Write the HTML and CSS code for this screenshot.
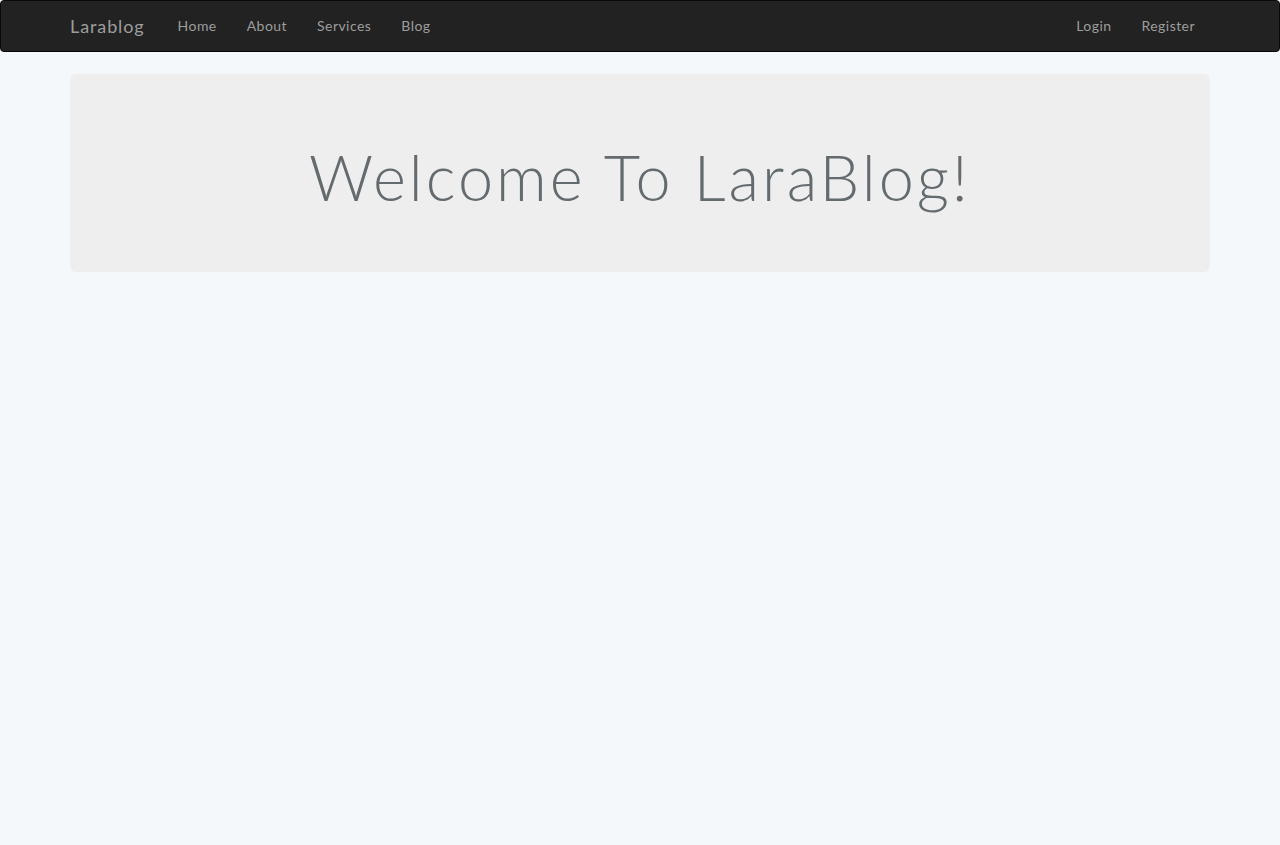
FILE: index.html
```html
<!DOCTYPE html>
<html lang="en">
<head>
<meta charset="utf-8">
<title>Larablog</title>
<link rel="stylesheet" href="styles.css">
</head>
<body>
<nav class="navbar">
  <div class="container nav-inner">
    <a class="brand" href="#">Larablog</a>
    <ul class="nav">
      <li><a href="#">Home</a></li>
      <li><a href="#">About</a></li>
      <li><a href="#">Services</a></li>
      <li><a href="#">Blog</a></li>
    </ul>
    <ul class="nav nav-right">
      <li><a href="#">Login</a></li>
      <li><a href="#">Register</a></li>
    </ul>
  </div>
</nav>
<div class="container">
  <div class="jumbotron">
    <h1>Welcome To LaraBlog!</h1>
  </div>
</div>
</body>
</html>
```

FILE: styles.css
```css
* { box-sizing: border-box; }
html, body { margin: 0; padding: 0; }
body {
  background: #f5f8fa;
  font-family: Lato, "Open Sans", sans-serif;
  font-weight: 300;
  font-size: 14px;
  line-height: 22px;
  color: #636b6f;
  height: 845px;
}
a { text-decoration: none; }
.navbar {
  background: #222;
  border: 1px solid #090909;
  border-radius: 4px;
  min-height: 52px;
  margin-bottom: 22px;
}
.container {
  width: 1170px;
  margin: 0 auto;
  padding: 0 15px;
}
.nav-inner {
  display: flex;
  align-items: stretch;
  height: 50px;
}
.brand {
  color: #9d9d9d;
  font-size: 18px;
  font-weight: 400;
  letter-spacing: 0.9px;
  padding: 14px 15px;
  margin-left: -15px;
  height: 50px;
  line-height: 22px;
  margin-right: 3px;
}
.nav {
  list-style: none;
  margin: 0;
  padding: 0;
  display: flex;
}
.nav a {
  display: block;
  color: #9d9d9d;
  font-weight: 400;
  letter-spacing: 0.45px;
  padding: 14px 15px;
  line-height: 22px;
}
.nav-right {
  margin-left: auto;
}
.jumbotron {
  background: #eeeeee;
  border-radius: 6px;
  padding: 48px 60px;
  margin-bottom: 30px;
  text-align: center;
}
.jumbotron h1 {
  margin: 20px 0 13px;
  font-size: 63px;
  line-height: 1.1;
  font-weight: 300;
  letter-spacing: 3px;
  color: #636b6f;
}
```
